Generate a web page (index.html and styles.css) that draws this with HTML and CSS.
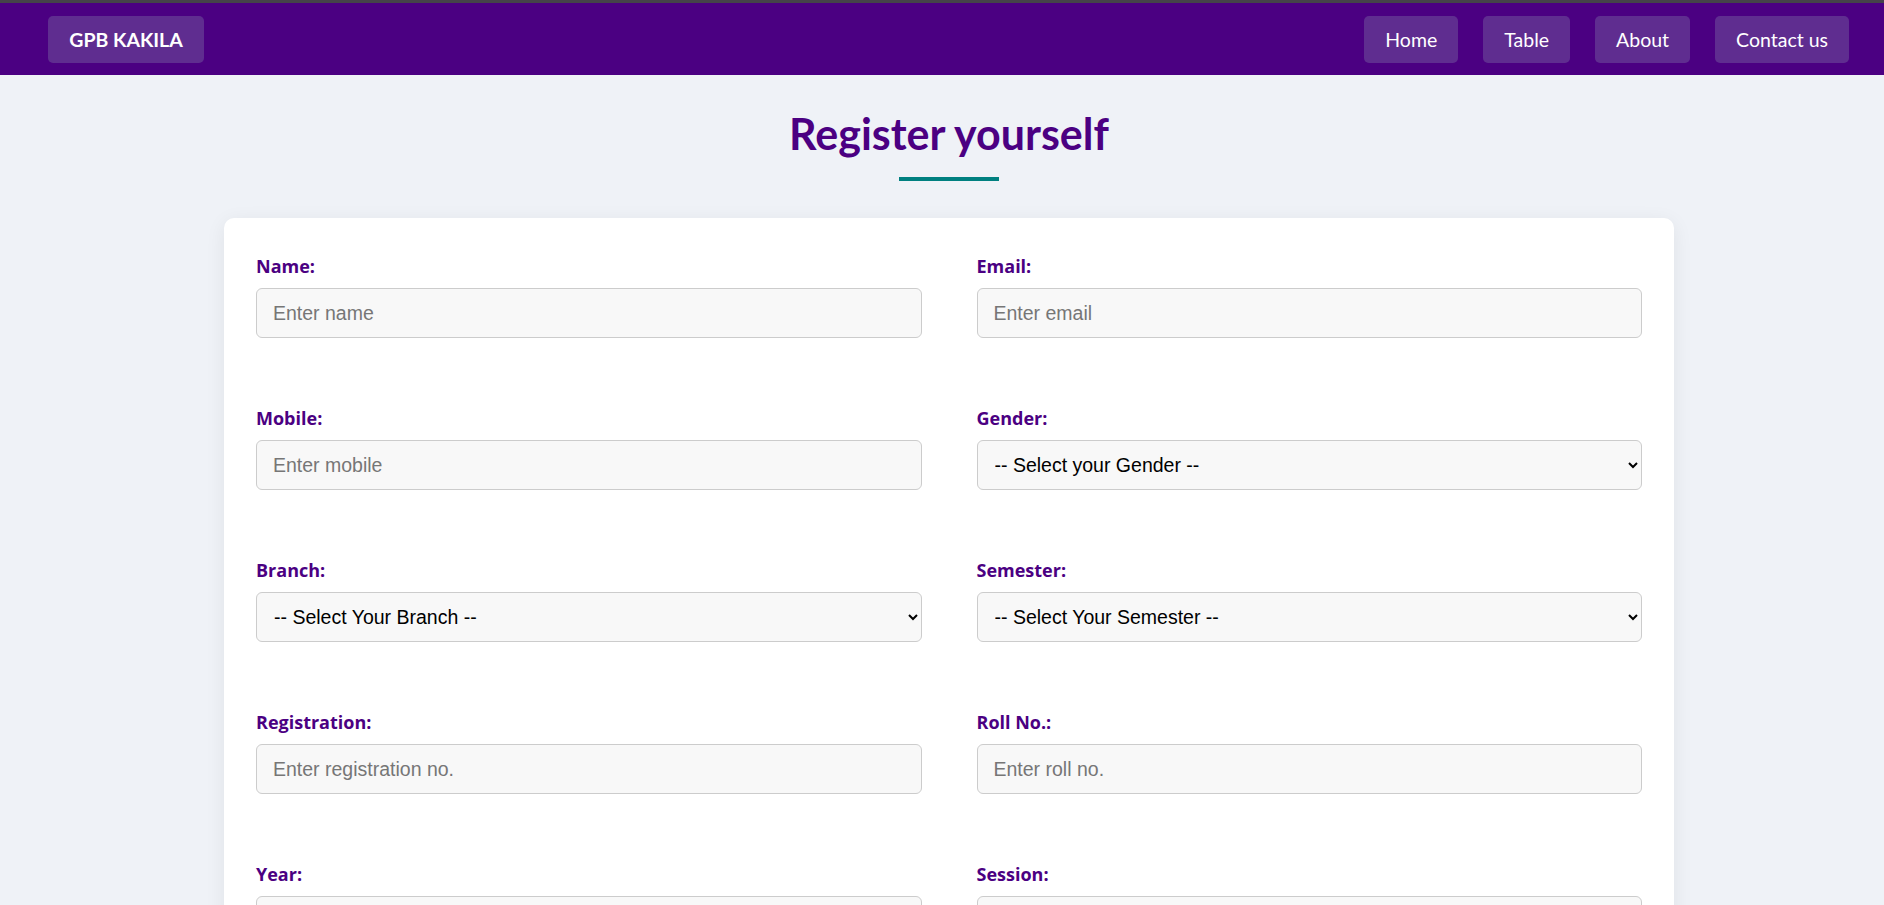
FILE: index.html
```html
<!DOCTYPE html>
<html lang="en">
<head>
<meta charset="utf-8">
<title>Register yourself</title>
<link rel="stylesheet" href="styles.css">
</head>
<body>
<div class="topstrip"></div>
<nav class="navbar">
  <a class="brand" href="#">GPB KAKILA</a>
  <ul class="nav-links">
    <li><a href="#">Home</a></li>
    <li><a href="#">Table</a></li>
    <li><a href="#">About</a></li>
    <li><a href="#">Contact us</a></li>
  </ul>
</nav>
<main class="page">
  <div class="container">
    <h1 class="title">Register yourself</h1>
    <div class="underline"></div>
    <form class="card">
      <div class="field"><label>Name:</label><input type="text" placeholder="Enter name"></div>
      <div class="field"><label>Email:</label><input type="email" placeholder="Enter email"></div>
      <div class="field"><label>Mobile:</label><input type="text" placeholder="Enter mobile"></div>
      <div class="field"><label>Gender:</label>
        <select><option>-- Select your Gender --</option><option>Male</option><option>Female</option></select></div>
      <div class="field"><label>Branch:</label>
        <select><option>-- Select Your Branch --</option></select></div>
      <div class="field"><label>Semester:</label>
        <select><option>-- Select Your Semester --</option></select></div>
      <div class="field"><label>Registration:</label><input type="text" placeholder="Enter registration no."></div>
      <div class="field"><label>Roll No.:</label><input type="text" placeholder="Enter roll no."></div>
      <div class="field"><label>Year:</label><input type="text" placeholder="Enter year"></div>
      <div class="field"><label>Session:</label><input type="text" placeholder="Enter session"></div>
    </form>
  </div>
</main>
</body>
</html>
```

FILE: styles.css
```css
* { box-sizing: border-box; }
html, body { margin: 0; padding: 0; }
body {
  background: #eff2f7;
  font-family: "Lato", "Open Sans", sans-serif;
}
.topstrip { height: 3px; background: #45434a; }
.navbar {
  height: 72px;
  background: #4b0082;
  display: flex;
  align-items: center;
  justify-content: space-between;
  padding: 0 35px 0 48px;
}
.brand, .nav-links a {
  display: flex;
  align-items: center;
  height: 47px;
  border-radius: 5px;
  background: #5f2d90;
  color: #fff;
  text-decoration: none;
}
.brand {
  width: 156px;
  justify-content: center;
  font-weight: 700;
  font-size: 19.5px;
}
.nav-links {
  list-style: none;
  margin: 0;
  padding: 0;
  display: flex;
  gap: 25px;
}
.nav-links a {
  padding: 0 21px;
  font-size: 19.5px;
}
.page { padding: 0 0 60px 14px; }
.container { width: 1450px; margin: 0 auto; }
.title {
  margin: 0;
  padding-top: 34px;
  text-align: center;
  color: #4b0082;
  font-size: 43px;
  line-height: 50px;
  font-weight: 700;
}
.underline {
  width: 100px;
  height: 4px;
  background: #008080;
  margin: 18px auto 37px;
}
.card {
  background: #fff;
  border-radius: 10px;
  box-shadow: 0 4px 20px rgba(0, 0, 0, 0.07);
  padding: 36px 32px 40px;
  display: grid;
  grid-template-columns: 1fr 1fr;
  column-gap: 55px;
  row-gap: 68px;
}
.field label {
  display: block;
  color: #4b0082;
  font-family: "Open Sans", "Lato", sans-serif;
  font-weight: 700;
  font-size: 18px;
  line-height: 24px;
  margin-bottom: 10px;
}
.field input, .field select {
  width: 100%;
  height: 50px;
  border: 1px solid #cccccc;
  border-radius: 6px;
  background: #f8f8f8;
  font-family: "Liberation Sans", Arial, sans-serif;
  font-size: 19.5px;
  color: #000;
  padding: 0 16px;
}
.field select { padding: 0 10px 0 13px; }
.field input::placeholder { color: #767676; }
```
